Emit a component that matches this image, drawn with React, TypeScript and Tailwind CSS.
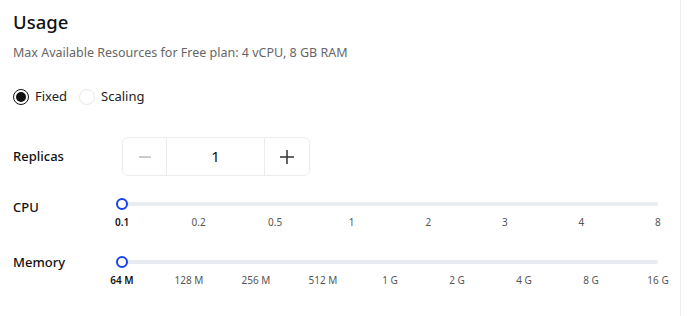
import React from "react";

const cpu = ["0.1", "0.2", "0.5", "1", "2", "3", "4", "8"];
const mem = ["64 M", "128 M", "256 M", "512 M", "1 G", "2 G", "4 G", "8 G", "16 G"];

function Slider({ marks }: { marks: string[] }) {
  return (
    <div className="w-[536px] flex flex-col">
      <div className="relative h-[12px] flex items-center">
        <div className="h-[4px] w-full rounded-full bg-[#e9ebf2]" />
        <div className="absolute left-[-6px] top-0 w-[12px] h-[12px] rounded-full border-2 border-[#1741f0] bg-white" />
      </div>
      <div className="flex justify-between mt-[5px]">
        {marks.map((m, i) => (
          <div key={m} className="w-0 flex justify-center">
            <span
              className={
                "whitespace-nowrap text-[10px] leading-[14px] " +
                (i === 0 ? "text-[#111] font-semibold" : "text-[#555]")
              }
            >
              {m}
            </span>
          </div>
        ))}
      </div>
    </div>
  );
}

export default function App() {
  return (
    <div
      className="w-[690px] h-[316px] bg-white flex"
      style={{ fontFamily: '"Noto Sans", "Open Sans", sans-serif' }}
    >
      <div className="w-[681px] h-full border-r border-[#ededed] pl-[13px] pt-[8px]">
        <h1 className="text-[18.5px] leading-[28px] font-medium text-[#111]">Usage</h1>
        <p className="mt-[8px] text-[12.5px] leading-[18px] text-[#666]">
          Max Available Resources for Free plan: 4 vCPU, 8 GB RAM
        </p>
        <div className="mt-[23px] flex items-center h-[24px] text-[13px] text-[#222]">
          <span className="w-[16px] h-[16px] rounded-full border-[1.5px] border-[#111] flex items-center justify-center mr-[6px]">
            <span className="w-[10px] h-[10px] rounded-full bg-[#111]" />
          </span>
          <span>Fixed</span>
          <span className="w-[16px] h-[16px] rounded-full border border-[#e6e8ef] ml-[12px] mr-[6px]" />
          <span>Scaling</span>
        </div>
        <div className="mt-[28px] flex items-center">
          <div className="w-[109px] text-[13px] text-[#111] font-medium">Replicas</div>
          <div className="flex h-[39px] w-[188px] border border-[#ececec] rounded-[6px]">
            <div className="w-[44px] flex items-center justify-center border-r border-[#ececec]">
              <svg width="14" height="14" viewBox="0 0 14 14">
                <path d="M1 7h12" stroke="#bbb" strokeWidth="1.5" />
              </svg>
            </div>
            <div className="flex-1 flex items-center justify-center text-[15px] text-[#111]">1</div>
            <div className="w-[45px] flex items-center justify-center border-l border-[#ececec]">
              <svg width="14" height="14" viewBox="0 0 14 14">
                <path d="M0 7h14M7 0v14" stroke="#333" strokeWidth="1.5" />
              </svg>
            </div>
          </div>
        </div>
        <div className="mt-[22px] flex items-start">
          <div className="w-[109px] text-[13px] text-[#111] font-medium leading-[20px] mt-[-1px]">CPU</div>
          <Slider marks={cpu} />
        </div>
        <div className="mt-[27px] flex items-start">
          <div className="w-[109px] text-[13px] text-[#111] font-medium leading-[20px] mt-[-4px]">Memory</div>
          <Slider marks={mem} />
        </div>
      </div>
    </div>
  );
}
